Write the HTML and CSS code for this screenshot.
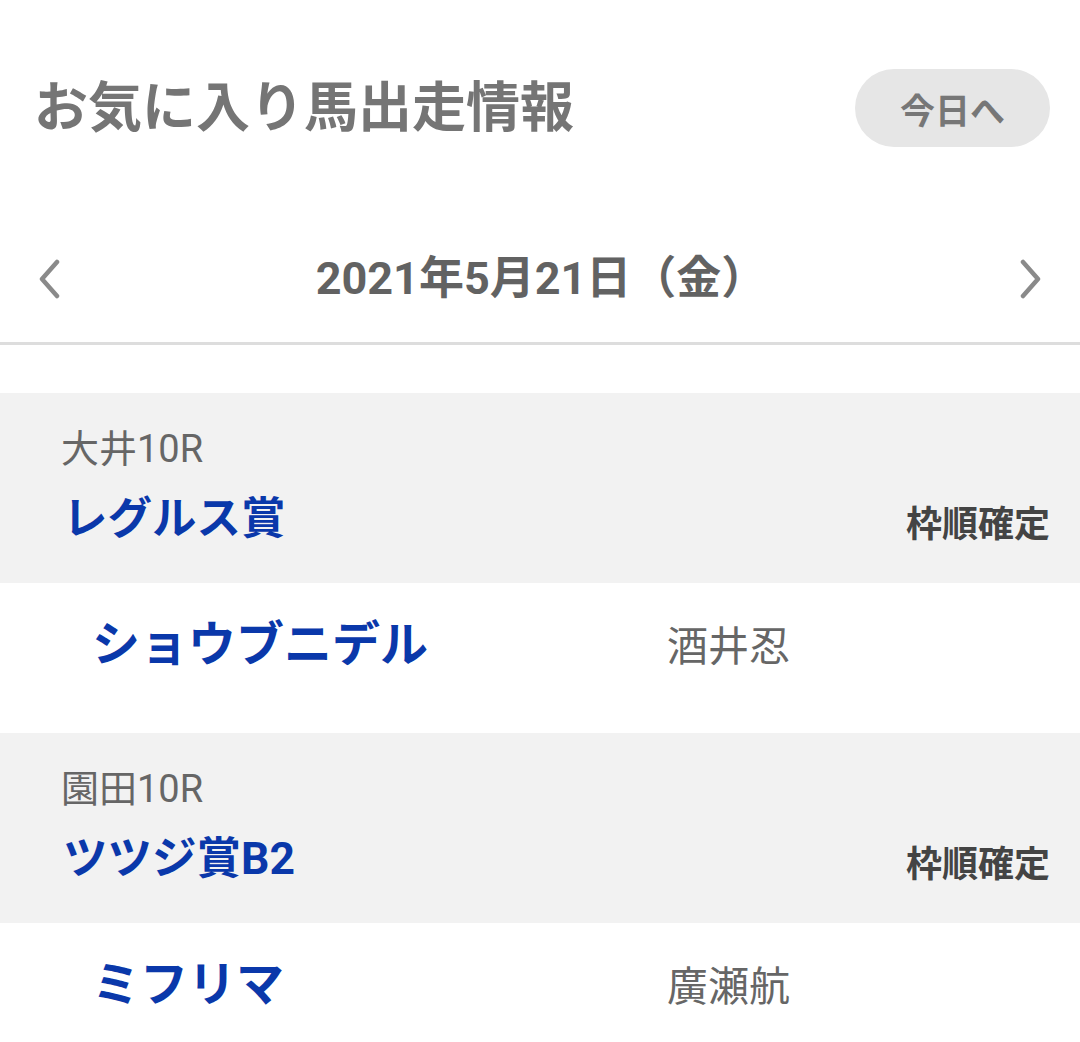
FILE: index.html
```html
<!DOCTYPE html>
<html lang="ja">
<head>
<meta charset="utf-8">
<title>お気に入り馬出走情報</title>
<link rel="stylesheet" href="styles.css">
</head>
<body>
<div class="page">
  <header class="top">
    <h1 class="title">お気に入り馬出走情報</h1>
    <button class="today">今日へ</button>
  </header>
  <nav class="datenav">
    <svg class="chev" viewBox="0 0 26 40" width="26" height="40"><path d="M21 3 L6 20 L21 37" fill="none" stroke="#8a8a8a" stroke-width="4.5" stroke-linecap="round" stroke-linejoin="round"/></svg>
    <div class="date">2021年5月21日（金）</div>
    <svg class="chev" viewBox="0 0 26 40" width="26" height="40"><path d="M5 3 L20 20 L5 37" fill="none" stroke="#8a8a8a" stroke-width="4.5" stroke-linecap="round" stroke-linejoin="round"/></svg>
  </nav>
  <main class="list">
    <section class="race">
      <div class="race-head">
        <div class="venue">大井10R</div>
        <div class="race-line">
          <span class="race-name">レグルス賞</span>
          <span class="status">枠順確定</span>
        </div>
      </div>
      <div class="horse-row">
        <span class="horse">ショウブニデル</span>
        <span class="jockey">酒井忍</span>
      </div>
    </section>
    <section class="race">
      <div class="race-head">
        <div class="venue">園田10R</div>
        <div class="race-line">
          <span class="race-name">ツツジ賞B2</span>
          <span class="status">枠順確定</span>
        </div>
      </div>
      <div class="horse-row">
        <span class="horse">ミフリマ</span>
        <span class="jockey">廣瀬航</span>
      </div>
    </section>
  </main>
</div>
</body>
</html>
```

FILE: styles.css
```css
html, body {
  margin: 0;
  padding: 0;
  background: #ffffff;
}
body {
  font-family: Roboto, "Noto Sans CJK JP", "Noto Sans", sans-serif;
  overflow: hidden;
}
.page {
  width: 1080px;
}
.top {
  display: flex;
  align-items: center;
  justify-content: space-between;
  padding: 70px 30px 0 34px;
  height: 78px;
}
.title {
  margin: 0;
  font-size: 54px;
  line-height: 78px;
  font-weight: 700;
  color: #757575;
  letter-spacing: 0;
}
.today {
  width: 195px;
  height: 78px;
  border: none;
  border-radius: 39px;
  background: #e6e6e6;
  color: #777777;
  font-family: "Noto Sans CJK JP", sans-serif;
  font-size: 35px;
  font-weight: 700;
  padding: 0;
  margin-top: -2px;
}
.datenav {
  display: flex;
  align-items: center;
  justify-content: space-between;
  margin-top: 80px;
  height: 102px;
  padding: 0 36px 12px 36px;
  border-bottom: 3px solid #dddddd;
}
.chev {
  display: block;
}
.date {
  font-size: 45px;
  font-weight: 700;
  color: #626262;
  line-height: 50px;
  margin-left: 2px;
}
.list {
  margin-top: 48px;
}
.race-head {
  background: #f2f2f2;
  height: 190px;
  box-sizing: border-box;
  padding: 36px 30px 0 61px;
}
.venue {
  font-size: 38px;
  line-height: 40px;
  color: #666666;
}
.race-line {
  display: flex;
  align-items: center;
  justify-content: space-between;
  margin-top: 26px;
  height: 48px;
}
.race-name {
  font-size: 44.5px;
  font-weight: 700;
  color: #0a38aa;
  line-height: 48px;
  margin-left: 2px;
}
.status {
  font-size: 36px;
  font-weight: 700;
  color: #444444;
  margin-top: 4px;
}
.horse-row {
  display: grid;
  grid-template-columns: 575px 1fr;
  align-items: center;
  height: 150px;
  box-sizing: border-box;
  padding: 32px 0 0 92px;
  align-content: start;
}
.horse {
  font-size: 48px;
  font-weight: 700;
  color: #0a38aa;
  line-height: 56px;
}
.jockey {
  font-size: 41px;
  color: #666666;
  line-height: 56px;
  margin-top: 4px;
}
```
